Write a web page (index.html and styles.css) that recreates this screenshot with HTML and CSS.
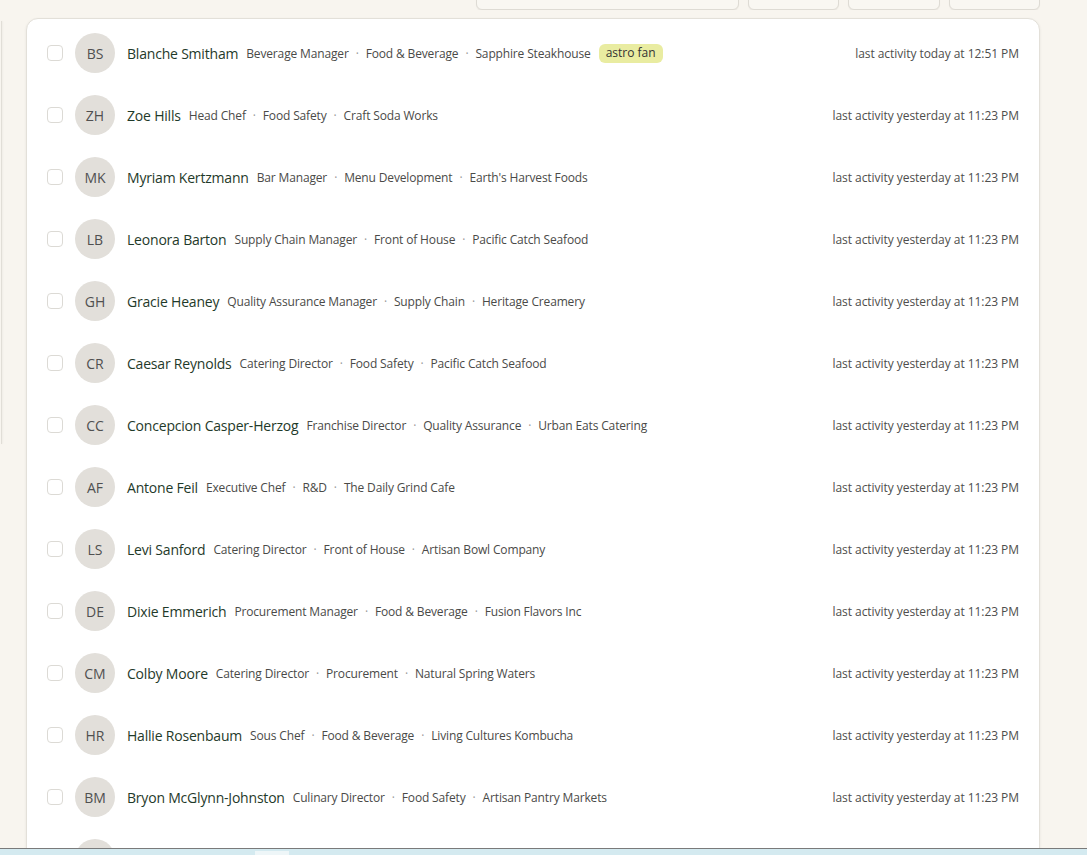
FILE: index.html
```html
<!DOCTYPE html>
<html lang="en">
<head>
<meta charset="utf-8">
<title>Contacts</title>
<link rel="stylesheet" href="styles.css">
</head>
<body>
<div class="toolbar">
  <div class="tb-btn tb-search"></div>
  <div class="tb-btn tb-sm"></div>
  <div class="tb-btn tb-sm2"></div>
  <div class="tb-btn tb-sm"></div>
</div>
<div class="main">
  <div class="side"></div>
  <div class="card">
    <div class="row">
      <span class="check"></span><span class="avatar">BS</span>
      <div class="info"><span class="name">Blanche Smitham</span><span class="meta">Beverage Manager<span class="sep">·</span>Food &amp; Beverage<span class="sep">·</span>Sapphire Steakhouse</span><span class="badge">astro fan</span></div>
      <span class="activity">last activity today at 12:51 PM</span>
    </div>
    <div class="row">
      <span class="check"></span><span class="avatar">ZH</span>
      <div class="info"><span class="name">Zoe Hills</span><span class="meta">Head Chef<span class="sep">·</span>Food Safety<span class="sep">·</span>Craft Soda Works</span></div>
      <span class="activity">last activity yesterday at 11:23 PM</span>
    </div>
    <div class="row">
      <span class="check"></span><span class="avatar">MK</span>
      <div class="info"><span class="name">Myriam Kertzmann</span><span class="meta">Bar Manager<span class="sep">·</span>Menu Development<span class="sep">·</span>Earth's Harvest Foods</span></div>
      <span class="activity">last activity yesterday at 11:23 PM</span>
    </div>
    <div class="row">
      <span class="check"></span><span class="avatar">LB</span>
      <div class="info"><span class="name">Leonora Barton</span><span class="meta">Supply Chain Manager<span class="sep">·</span>Front of House<span class="sep">·</span>Pacific Catch Seafood</span></div>
      <span class="activity">last activity yesterday at 11:23 PM</span>
    </div>
    <div class="row">
      <span class="check"></span><span class="avatar">GH</span>
      <div class="info"><span class="name">Gracie Heaney</span><span class="meta">Quality Assurance Manager<span class="sep">·</span>Supply Chain<span class="sep">·</span>Heritage Creamery</span></div>
      <span class="activity">last activity yesterday at 11:23 PM</span>
    </div>
    <div class="row">
      <span class="check"></span><span class="avatar">CR</span>
      <div class="info"><span class="name">Caesar Reynolds</span><span class="meta">Catering Director<span class="sep">·</span>Food Safety<span class="sep">·</span>Pacific Catch Seafood</span></div>
      <span class="activity">last activity yesterday at 11:23 PM</span>
    </div>
    <div class="row">
      <span class="check"></span><span class="avatar">CC</span>
      <div class="info"><span class="name">Concepcion Casper-Herzog</span><span class="meta">Franchise Director<span class="sep">·</span>Quality Assurance<span class="sep">·</span>Urban Eats Catering</span></div>
      <span class="activity">last activity yesterday at 11:23 PM</span>
    </div>
    <div class="row">
      <span class="check"></span><span class="avatar">AF</span>
      <div class="info"><span class="name">Antone Feil</span><span class="meta">Executive Chef<span class="sep">·</span>R&amp;D<span class="sep">·</span>The Daily Grind Cafe</span></div>
      <span class="activity">last activity yesterday at 11:23 PM</span>
    </div>
    <div class="row">
      <span class="check"></span><span class="avatar">LS</span>
      <div class="info"><span class="name">Levi Sanford</span><span class="meta">Catering Director<span class="sep">·</span>Front of House<span class="sep">·</span>Artisan Bowl Company</span></div>
      <span class="activity">last activity yesterday at 11:23 PM</span>
    </div>
    <div class="row">
      <span class="check"></span><span class="avatar">DE</span>
      <div class="info"><span class="name">Dixie Emmerich</span><span class="meta">Procurement Manager<span class="sep">·</span>Food &amp; Beverage<span class="sep">·</span>Fusion Flavors Inc</span></div>
      <span class="activity">last activity yesterday at 11:23 PM</span>
    </div>
    <div class="row">
      <span class="check"></span><span class="avatar">CM</span>
      <div class="info"><span class="name">Colby Moore</span><span class="meta">Catering Director<span class="sep">·</span>Procurement<span class="sep">·</span>Natural Spring Waters</span></div>
      <span class="activity">last activity yesterday at 11:23 PM</span>
    </div>
    <div class="row">
      <span class="check"></span><span class="avatar">HR</span>
      <div class="info"><span class="name">Hallie Rosenbaum</span><span class="meta">Sous Chef<span class="sep">·</span>Food &amp; Beverage<span class="sep">·</span>Living Cultures Kombucha</span></div>
      <span class="activity">last activity yesterday at 11:23 PM</span>
    </div>
    <div class="row">
      <span class="check"></span><span class="avatar">BM</span>
      <div class="info"><span class="name">Bryon McGlynn-Johnston</span><span class="meta">Culinary Director<span class="sep">·</span>Food Safety<span class="sep">·</span>Artisan Pantry Markets</span></div>
      <span class="activity">last activity yesterday at 11:23 PM</span>
    </div>
    <div class="row">
      <span class="check"></span><span class="avatar"></span>
    </div>
  </div>
</div>
<div class="statusbar"><span class="status-chip"></span></div>
</body>
</html>
```

FILE: styles.css
```css
html, body {
  margin: 0;
  padding: 0;
}
body {
  background: #f8f5ef;
  font-family: "Open Sans", "Noto Sans", "Liberation Sans", sans-serif;
  height: 855px;
  overflow: hidden;
}
.toolbar {
  height: 10px;
  display: flex;
  justify-content: flex-end;
  align-items: flex-end;
  gap: 9px;
  padding-right: 47px;
  overflow: hidden;
}
.tb-btn {
  flex: none;
  height: 36px;
  box-sizing: border-box;
  border: 1px solid #dedbd4;
  border-radius: 6px;
  background: #f9f7f2;
  box-shadow: 0 1px 1px rgba(0,0,0,0.05);
}
.tb-search { width: 263px; }
.tb-sm { width: 91px; }
.tb-sm2 { width: 92px; }
.main {
  display: flex;
  align-items: flex-start;
  margin-top: 8px;
}
.side {
  flex: none;
  width: 1px;
  height: 423px;
  margin-top: 3px;
  margin-right: 24px;
  border-right: 1px solid #e1ded7;
  box-shadow: 1px 0 2px rgba(0,0,0,0.04);
}
.card {
  flex: none;
  width: 1014px;
  box-sizing: border-box;
  background: #fff;
  border: 1px solid #e3e0d9;
  border-radius: 12px;
  box-shadow: 0 1px 3px rgba(0,0,0,0.07);
  padding: 3px 20px 0 20px;
}
.row {
  height: 62px;
  display: flex;
  align-items: center;
}
.check {
  flex: none;
  width: 16px;
  height: 16px;
  box-sizing: border-box;
  border: 1px solid #dcdad5;
  border-radius: 4px;
  background: #fff;
  margin-right: 12px;
}
.avatar {
  flex: none;
  width: 40px;
  height: 40px;
  border-radius: 50%;
  background: #e2dfda;
  color: #505050;
  font-size: 14px;
  display: flex;
  align-items: center;
  justify-content: center;
  margin-right: 12px;
}
.info {
  flex: 1;
  display: flex;
  align-items: center;
  min-width: 0;
  white-space: nowrap;
}
.name {
  font-size: 14px;
  letter-spacing: -0.2px;
  color: #1f3a2a;
  margin-right: 8px;
}
.meta {
  font-size: 12px;
  letter-spacing: -0.15px;
  color: #4a4a48;
}
.sep {
  color: #999;
  margin: 0 7px;
}
.badge {
  margin-left: 8px;
  font-size: 12px;
  color: #333;
  background: #e9eca1;
  border-radius: 6px;
  padding: 1px 7px 2px;
  line-height: 16px;
}
.activity {
  flex: none;
  font-size: 12px;
  letter-spacing: -0.05px;
  color: #4e4e4c;
  white-space: nowrap;
}
.statusbar {
  position: fixed;
  left: 0;
  right: 0;
  bottom: 0;
  height: 6px;
  background: #d4eaf0;
  border-top: 1px solid #7a7a7a;
}
.status-chip {
  position: absolute;
  left: 255px;
  top: 2px;
  width: 34px;
  height: 6px;
  background: #eef6f8;
}
```
